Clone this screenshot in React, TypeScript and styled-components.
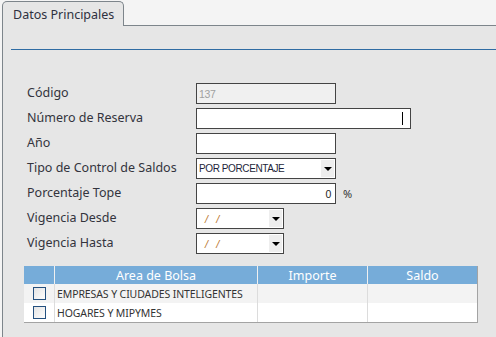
import React from "react";
import styled, { createGlobalStyle } from "styled-components";

const Global = createGlobalStyle`
  html, body { margin: 0; padding: 0; background: #f4f4f4; }
  body { font-family: "Noto Sans", "Open Sans", sans-serif; overflow: hidden; }
`;

const Page = styled.div`
  width: 496px;
  height: 337px;
  display: flex;
  flex-direction: column;
  padding-left: 2px;
  box-sizing: border-box;
`;

const TabStrip = styled.div`
  display: flex;
  align-items: flex-end;
  height: 25px;
  padding-top: 1px;
  box-sizing: border-box;
`;

const Tab = styled.div`
  width: 122px;
  height: 25px;
  box-sizing: border-box;
  border: 1px solid #7d858b;
  border-bottom: none;
  border-radius: 5px 5px 0 0;
  background: #e6e6e6;
  color: #2f3140;
  font-size: 12.5px;
  padding: 4px 0 0 10px;
  margin-bottom: -1px;
  position: relative;
  z-index: 1;
`;

const Panel = styled.div`
  flex: 1;
  background: #e6e6e6;
  border-top: 1px solid #7d858b;
  border-left: 1px solid #7d858b;
  padding: 23px 0 0 8px;
  display: flex;
  flex-direction: column;
`;

const Rule = styled.div`
  height: 1px;
  background: #2f6ca3;
  margin-bottom: 33px;
`;

const Form = styled.div`
  display: grid;
  grid-template-columns: 169px auto;
  row-gap: 4px;
  padding-left: 16px;
`;

const Label = styled.div`
  font-size: 12.5px;
  color: #33343d;
  height: 21px;
  display: flex;
  align-items: center;
  margin-top: -1px;
`;

const Field = styled.div`
  display: flex;
  align-items: center;
  gap: 7px;
`;

const Box = styled.div<{ w: number; disabled?: boolean; right?: boolean }>`
  width: ${(p) => p.w}px;
  height: 21px;
  box-sizing: border-box;
  border: 1px solid #444;
  background: ${(p) => (p.disabled ? "#f0f0f0" : "#fff")};
  color: ${(p) => (p.disabled ? "#a0a0a0" : "#222")};
  font-family: "Liberation Sans", Arial, sans-serif;
  font-size: 10.5px;
  letter-spacing: -0.3px;
  display: flex;
  align-items: center;
  justify-content: ${(p) => (p.right ? "flex-end" : "flex-start")};
  padding: 0 4px 0 2px;
  position: relative;
`;

const Caret = styled.div`
  position: absolute;
  right: 7px;
  top: 3px;
  width: 1px;
  height: 13px;
  background: #000;
`;

const SelectBox = styled.div<{ w: number }>`
  width: ${(p) => p.w}px;
  height: 21px;
  box-sizing: border-box;
  border: 1px solid #444;
  background: #fff;
  font-family: "Liberation Sans", Arial, sans-serif;
  font-size: 10px;
  letter-spacing: -0.4px;
  color: #1d1f3a;
  display: flex;
  align-items: stretch;
`;

const SelectText = styled.div<{ pad: number }>`
  flex: 1;
  display: flex;
  align-items: center;
  padding-left: ${(p) => p.pad}px;
`;

const DateSlash = styled.span`
  color: #b8742c;
  font-style: italic;
  font-size: 11px;
  word-spacing: 6px;
`;

const Arrow = styled.div`
  width: 13px;
  margin: 1px;
  background: #eeeeee;
  display: flex;
  align-items: center;
  justify-content: center;
  &::after {
    content: "";
    border-left: 4px solid transparent;
    border-right: 4px solid transparent;
    border-top: 4px solid #000;
  }
`;

const Percent = styled.span`
  font-size: 11px;
  color: #333;
`;

const Table = styled.div`
  margin: 12px 0 0 13px;
  width: 453px;
  border-right: 1px solid #a3a3a3;
  border-bottom: 1px solid #a3a3a3;
  display: grid;
  grid-template-columns: 30px 203px 110px 110px;
`;

const Head = styled.div`
  background: #76acd9;
  color: #fff;
  font-size: 12.5px;
  height: 18px;
  display: flex;
  align-items: center;
  justify-content: center;
  border-left: 1px solid #f0f0f0;
  &:first-child { border-left: none; }
`;

const Cell = styled.div<{ alt?: boolean; first?: boolean }>`
  background: ${(p) => (p.alt ? "#f3f3f3" : "#fff")};
  height: 19px;
  font-size: 10.5px;
  letter-spacing: -0.1px;
  color: #333;
  display: flex;
  align-items: center;
  padding-left: ${(p) => (p.first ? "0" : "2px")};
  justify-content: ${(p) => (p.first ? "center" : "flex-start")};
  border-left: ${(p) => (p.first ? "none" : "1px solid #dcdcdc")};
`;

const Check = styled.div`
  width: 11px;
  height: 11px;
  border: 1px solid #24507f;
  background: linear-gradient(135deg, #e4e4e4, #fdfdfd);
`;

const rows = ["EMPRESAS Y CIUDADES INTELIGENTES", "HOGARES Y MIPYMES"];

export default function App() {
  return (
    <Page>
      <Global />
      <TabStrip>
        <Tab>Datos Principales</Tab>
      </TabStrip>
      <Panel>
        <Rule />
        <Form>
          <Label>Código</Label>
          <Field><Box w={140} disabled>137</Box></Field>
          <Label>Número de Reserva</Label>
          <Field><Box w={215}><Caret /></Box></Field>
          <Label>Año</Label>
          <Field><Box w={140} /></Field>
          <Label>Tipo de Control de Saldos</Label>
          <Field>
            <SelectBox w={140}>
              <SelectText pad={2}>POR PORCENTAJE</SelectText>
              <Arrow />
            </SelectBox>
          </Field>
          <Label>Porcentaje Tope</Label>
          <Field><Box w={140} right>0</Box><Percent>%</Percent></Field>
          <Label>Vigencia Desde</Label>
          <Field>
            <SelectBox w={88}>
              <SelectText pad={8}><DateSlash>/ /</DateSlash></SelectText>
              <Arrow />
            </SelectBox>
          </Field>
          <Label>Vigencia Hasta</Label>
          <Field>
            <SelectBox w={88}>
              <SelectText pad={8}><DateSlash>/ /</DateSlash></SelectText>
              <Arrow />
            </SelectBox>
          </Field>
        </Form>
        <Table>
          <Head />
          <Head>Area de Bolsa</Head>
          <Head>Importe</Head>
          <Head>Saldo</Head>
          {rows.map((r, i) => (
            <React.Fragment key={r}>
              <Cell first alt={i === 0}><Check /></Cell>
              <Cell alt={i === 0}>{r}</Cell>
              <Cell alt={i === 0} />
              <Cell alt={i === 0} />
            </React.Fragment>
          ))}
        </Table>
      </Panel>
    </Page>
  );
}
